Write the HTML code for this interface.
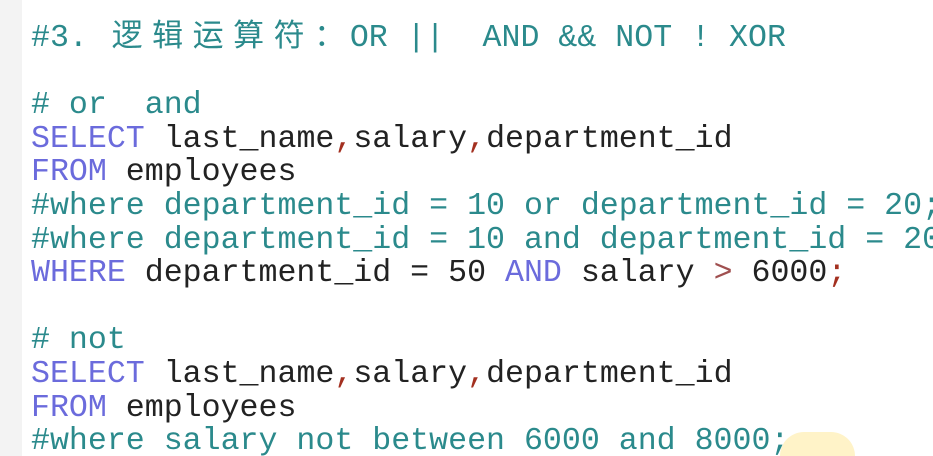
<!DOCTYPE html>
<html><head><meta charset="utf-8"><style>
html,body{margin:0;width:933px;height:456px;background:#fff;overflow:hidden;position:relative}
.g{position:absolute;left:0;top:0;width:22px;height:456px;background:#f3f3f3}
pre{position:absolute;left:31px;top:16px;margin:0;height:440px;overflow:hidden;font-family:"Liberation Mono",monospace;font-size:31.6px;line-height:33.6px;color:#222;white-space:pre}
.c{color:#2b8a8c}.k{color:#6b6bdc}.r{color:#a33020}.o{color:#a05050}
.z{display:inline-block;width:40.5px;text-align:center;font-family:"Noto Sans CJK SC",sans-serif;font-size:31px}
.y{position:absolute;left:780px;top:432px;width:75px;height:24px;border-radius:38px 38px 0 0;background:#fff3c8}
</style></head><body><div class="g"></div><div class="y"></div>
<pre><span class="c">#3. <span class="z">逻</span><span class="z">辑</span><span class="z">运</span><span class="z">算</span><span class="z">符</span><span class="z">：</span>OR ||  AND &amp;&amp; NOT ! XOR</span>

<span class="c"># or  and</span>
<span class="k">SELECT</span> last_name<span class="r">,</span>salary<span class="r">,</span>department_id
<span class="k">FROM</span> employees
<span class="c">#where department_id = 10 or department_id = 20;</span>
<span class="c">#where department_id = 10 and department_id = 20</span>
<span class="k">WHERE</span> department_id = 50 <span class="k">AND</span> salary <span class="o">&gt;</span> 6000<span class="r">;</span>

<span class="c"># not</span>
<span class="k">SELECT</span> last_name<span class="r">,</span>salary<span class="r">,</span>department_id
<span class="k">FROM</span> employees
<span class="c">#where salary not between 6000 and 8000;</span></pre>
</body></html>
